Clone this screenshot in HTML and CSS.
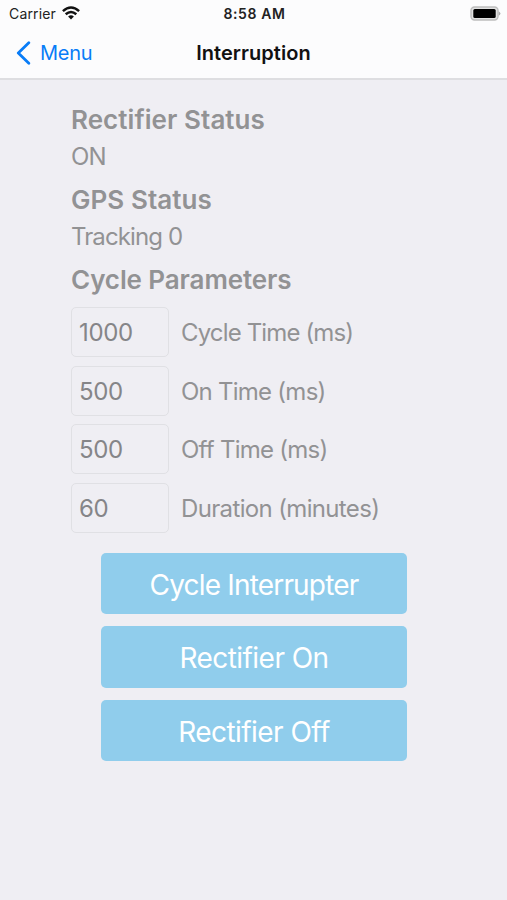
FILE: index.html
```html
<!DOCTYPE html>
<html lang="en">
<head>
<meta charset="utf-8">
<title>Interruption</title>
<link rel="stylesheet" href="styles.css">
</head>
<body>
<header class="top">
  <div class="status">
    <div class="carrier"><span>Carrier</span>
      <svg class="wifi" width="18" height="14" viewBox="0 0 18 14"><g fill="none" stroke="#111" stroke-width="2.5"><path d="M.9 5.1Q9-2.1 17.1 5.1"/><path d="M3.7 8.3Q9 3.6 14.3 8.3"/></g><path fill="#111" d="M6.1 10.5Q9 8 11.9 10.5L9 13.4Z"/></svg>
    </div>
    <div class="clock">8:58 AM</div>
    <svg class="battery" width="31" height="16" viewBox="0 0 31 16"><rect x="1" y="1" width="27" height="13" rx="3.5" fill="#e2e2e2" stroke="#bdbdbd" stroke-width="1.4"/><rect x="3.3" y="3" width="22.4" height="9" rx="1.5"/><path d="M28.7 5.2q3.4 2.3 0 4.6z" fill="#aaa"/></svg>
  </div>
  <nav class="nav">
    <a class="back"><svg width="15" height="24" viewBox="0 0 15 24"><path d="M12.8 1.8L2.3 12L12.8 22.2" fill="none" stroke="#087cf7" stroke-width="2.8" stroke-linecap="round" stroke-linejoin="round"/></svg><span>Menu</span></a>
    <h1>Interruption</h1>
  </nav>
</header>
<main>
  <h2>Rectifier Status</h2><p>ON</p>
  <h2>GPS Status</h2><p class="tracking">Tracking 0</p>
  <h2 class="parameters">Cycle Parameters</h2>
  <div class="fields">
    <div class="row"><div class="input">1000</div><span class="cycle">Cycle Time (ms)</span></div>
    <div class="row"><div class="input">500</div><span>On Time (ms)</span></div>
    <div class="row"><div class="input">500</div><span>Off Time (ms)</span></div>
    <div class="row"><div class="input">60</div><span class="duration">Duration (minutes)</span></div>
  </div>
  <div class="buttons">
    <button class="interrupter">Cycle Interrupter</button>
    <button>Rectifier On</button>
    <button>Rectifier Off</button>
  </div>
</main>
</body>
</html>
```
FILE: styles.css
```css
* { box-sizing: border-box; }
body { margin: 0; height: 900px; background: #efeef3; font-family: Inter, "Liberation Sans", sans-serif; overflow: hidden; }
.top { height: 80px; background: #fcfcfd; border-bottom: 2px solid #dedee1; }
.status { height: 27px; display: grid; grid-template-columns: 1fr 1fr 1fr; align-items: center; padding: 0 6px 0 9px; font-size: 14px; color: #222; }
.carrier { display: flex; align-items: center; gap: 6px; letter-spacing: .15px; }
.wifi { margin-top: -1px; }
.clock { text-align: center; font-weight: 600; letter-spacing: .6px; padding-right: 1px; }
.battery { justify-self: end; }
.nav { height: 51px; display: grid; grid-template-columns: 1fr 1fr 1fr; align-items: center; padding: 0 16px; }
.back { display: flex; align-items: center; gap: 9px; color: #087cf7; font-size: 20px; letter-spacing: -.25px; }
h1 { margin: 0; text-align: center; font-size: 20px; font-weight: 600; letter-spacing: .05px; color: #111; }
main { padding: 20px 71px 0; color: #929294; }
h2 { margin: 0; height: 40px; line-height: 40px; font-size: 26px; font-weight: 600; letter-spacing: .06px; white-space: nowrap; }
.parameters { letter-spacing: -.1px; }
p { margin: 0; height: 40px; line-height: 34px; font-size: 24px; letter-spacing: -.9px; }
.tracking { letter-spacing: -.9px; }
.fields { display: grid; gap: 9px; padding-top: 7px; }
.row { display: flex; align-items: center; gap: 12px; height: 49.7px; font-size: 24px; letter-spacing: -.75px; white-space: nowrap; }
.row span { padding-top: 1px; }
.row .cycle { letter-spacing: -.86px; }
.row .duration { letter-spacing: -.65px; }
.input { width: 98px; height: 50px; border: 1px solid #e0e0e4; border-radius: 5px; padding-left: 7px; line-height: 50px; letter-spacing: -.35px; color: #858588; }
.buttons { display: grid; gap: 12px; padding: 20px 29px 0 30px; }
button { height: 61.5px; border: 0; border-radius: 5px; background: #90cdec; color: #fff; font: 400 28px Inter, sans-serif; letter-spacing: -.55px; padding: 2px 0 0; }
.interrupter { letter-spacing: -.82px; }
```
